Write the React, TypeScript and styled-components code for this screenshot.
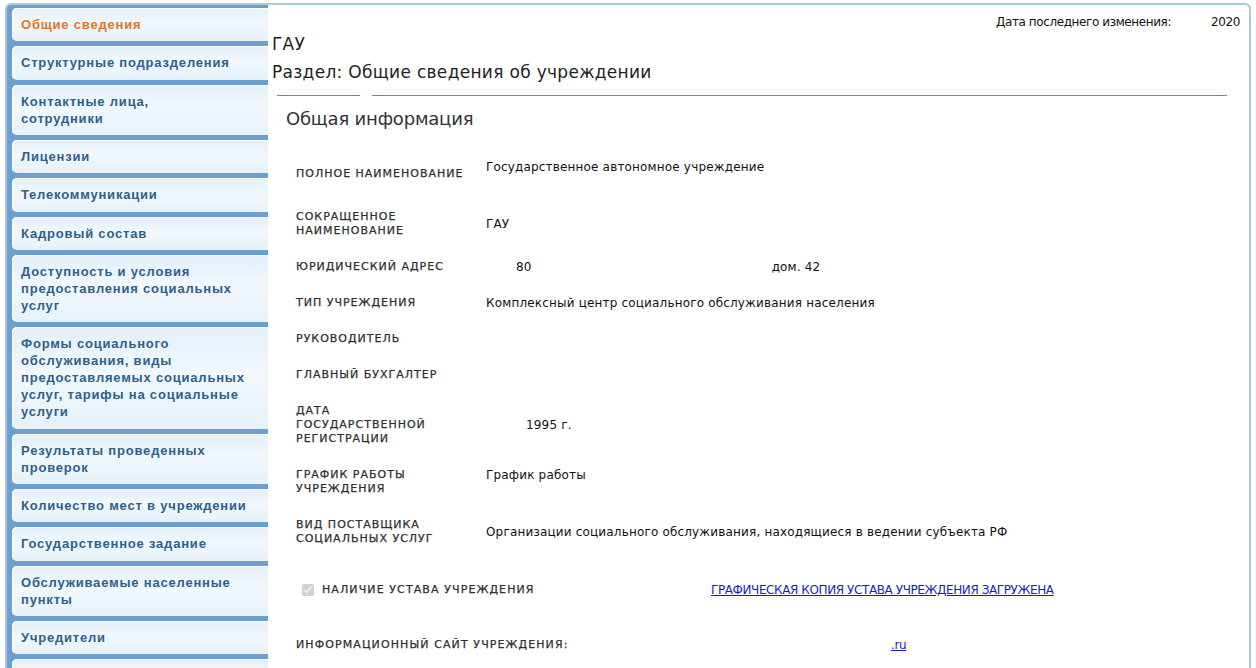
import styled, { createGlobalStyle } from "styled-components";

const GlobalStyle = createGlobalStyle`
    html, body {
        margin: 0;
        padding: 0;
        background: #ffffff;
        font-family: "DejaVu Sans", Verdana, sans-serif;
    }
`;

const Frame = styled.div`
    margin: 3px 5px 0 5px;
    border: 2px solid #a9c8dc;
    border-bottom: none;
    border-radius: 6px 6px 0 0;
    display: grid;
    grid-template-columns: 261px 1fr;
    height: 665px;
    overflow: hidden;
    box-sizing: border-box;
`;

const SideBar = styled.nav`
    background: #6a9fcf;
    padding: 3px 0 0 5px;
    display: flex;
    flex-direction: column;
    gap: 5px;
`;

const Tab = styled.div<{ $active?: boolean }>`
    background: linear-gradient(to bottom, #e4eff9 0%, #f1f7fd 45%, #e7f1fa 100%);
    border-radius: 5px 0 0 5px;
    padding: 8px 8px 8.35px 9px;
    min-height: 17px;
    font-family: "Liberation Sans", Arial, sans-serif;
    font-weight: bold;
    font-size: 13px;
    line-height: 17px;
    letter-spacing: 0.8px;
    white-space: nowrap;
    color: ${(p) => (p.$active ? "#e0762a" : "#2f5f8c")};
    box-shadow: inset 1px 1px 0 #ffffff;
`;

const Main = styled.main`
    padding: 0 22px 0 4px;
    position: relative;
    color: #222;
`;

const Updated = styled.div`
    position: absolute;
    top: 10px;
    right: 9px;
    font-size: 12px;
    font-family: "DejaVu Sans", Tahoma, sans-serif;
    letter-spacing: -0.4px;
    color: #111;
    display: flex;
    gap: 40px;
`;

const Org = styled.div`
    margin-top: 29px;
    font-size: 17px;
    line-height: 20px;
    letter-spacing: 0.2px;
`;

const Section = styled.h1`
    margin: 8px 0 0 0;
    font-weight: normal;
    font-size: 17px;
    line-height: 20px;
    letter-spacing: 0.3px;
    color: #222;
`;

const Rule = styled.div`
    display: flex;
    gap: 12px;
    margin: 13px 0 0 5px;
`;

const RuleLine = styled.div<{ $grow?: boolean }>`
    height: 1px;
    background: #c8742e;
    width: ${(p) => (p.$grow ? "auto" : "83px")};
    flex: ${(p) => (p.$grow ? "1" : "none")};
`;

const Subtitle = styled.h2`
    margin: 12px 0 0 14px;
    font-weight: normal;
    font-size: 18px;
    line-height: 22px;
    letter-spacing: -0.2px;
    color: #333;
`;

const Table = styled.div`
    margin: 19px 0 0 24px;
    display: grid;
    grid-template-columns: 190px 1fr;
`;

const Label = styled.div<{ $pad?: number }>`
    padding: ${(p) => p.$pad ?? 11}px 10px ${(p) => p.$pad ?? 11}px 0;
    font-size: 11px;
    line-height: 14px;
    letter-spacing: 1px;
    text-transform: uppercase;
    color: #2e2e2e;
    align-self: center;
    -webkit-text-stroke: 0.25px #2e2e2e;
`;

const Value = styled.div<{ $align?: string; $shift?: number }>`
    padding-left: ${(p) => p.$shift ?? 0}px;
    font-size: 12px;
    line-height: 14px;
    letter-spacing: 0.17px;
    color: #111;
    align-self: ${(p) => p.$align ?? "center"};
    padding-top: ${(p) => (p.$align === "start" ? 11 : 0)}px;
    display: flex;
    gap: 240px;
`;

const CheckRow = styled.div`
    margin: 26px 0 0 30px;
    display: flex;
    align-items: center;
`;

const Check = styled.input`
    width: 12px;
    height: 12px;
    margin: 0 8px 0 0;
    accent-color: #b8b8b8;
`;

const FieldName = styled.span<{ $width: number }>`
    font-size: 11px;
    line-height: 14px;
    letter-spacing: 1.1px;
    color: #2e2e2e;
    -webkit-text-stroke: 0.25px #2e2e2e;
    width: ${(p) => p.$width}px;
`;

const Link = styled.a`
    font-size: 12px;
    letter-spacing: -0.4px;
    color: #1a1acc;
    text-decoration: underline;
`;

const SiteRow = styled.div`
    margin: 41px 0 0 24px;
    display: flex;
    align-items: center;
`;

const tabs: string[][] = [
    ["Общие сведения"],
    ["Структурные подразделения"],
    ["Контактные лица,", "сотрудники"],
    ["Лицензии"],
    ["Телекоммуникации"],
    ["Кадровый состав"],
    ["Доступность и условия", "предоставления социальных", "услуг"],
    ["Формы социального", "обслуживания, виды", "предоставляемых социальных", "услуг, тарифы на социальные", "услуги"],
    ["Результаты проведенных", "проверок"],
    ["Количество мест в учреждении"],
    ["Государственное задание"],
    ["Обслуживаемые населенные", "пункты"],
    ["Учредители"],
    [],
];

const lines = (items: string[]) => items.map((l, j) => <div key={j}>{l}</div>);

const App: React.FC = () => {
    return (
        <>
            <GlobalStyle />
            <Frame>
                <SideBar>
                    {tabs.map((t, i) => (
                        <Tab key={i} $active={i === 0}>
                            {lines(t)}
                        </Tab>
                    ))}
                </SideBar>
                <Main>
                    <Updated>
                        <span>Дата последнего изменения:</span>
                        <span>2020</span>
                    </Updated>
                    <Org>ГАУ</Org>
                    <Section>Раздел: Общие сведения об учреждении</Section>
                    <Rule>
                        <RuleLine />
                        <RuleLine $grow />
                    </Rule>
                    <Subtitle>Общая информация</Subtitle>
                    <Table>
                        <Label $pad={18}>Полное наименование</Label>
                        <Value $align="start">Государственное автономное учреждение</Value>

                        <Label>{lines(["Сокращенное", "наименование"])}</Label>
                        <Value>ГАУ</Value>

                        <Label>Юридический адрес</Label>
                        <Value $shift={30}>
                            <span>80</span>
                            <span>дом. 42</span>
                        </Value>

                        <Label>Тип учреждения</Label>
                        <Value>Комплексный центр социального обслуживания населения</Value>

                        <Label>Руководитель</Label>
                        <Value />

                        <Label>Главный бухгалтер</Label>
                        <Value />

                        <Label>{lines(["Дата", "государственной", "регистрации"])}</Label>
                        <Value $shift={40}>1995 г.</Value>

                        <Label>{lines(["График работы", "учреждения"])}</Label>
                        <Value $align="start">График работы</Value>

                        <Label>{lines(["Вид поставщика", "социальных услуг"])}</Label>
                        <Value>Организации социального обслуживания, находящиеся в ведении субъекта РФ</Value>
                    </Table>
                    <CheckRow>
                        <Check type="checkbox" checked disabled readOnly />
                        <FieldName $width={389}>НАЛИЧИЕ УСТАВА УЧРЕЖДЕНИЯ</FieldName>
                        <Link href="#">ГРАФИЧЕСКАЯ КОПИЯ УСТАВА УЧРЕЖДЕНИЯ ЗАГРУЖЕНА</Link>
                    </CheckRow>
                    <SiteRow>
                        <FieldName $width={595}>ИНФОРМАЦИОННЫЙ САЙТ УЧРЕЖДЕНИЯ:</FieldName>
                        <Link href="#">.ru</Link>
                    </SiteRow>
                </Main>
            </Frame>
        </>
    );
};
export default App;
